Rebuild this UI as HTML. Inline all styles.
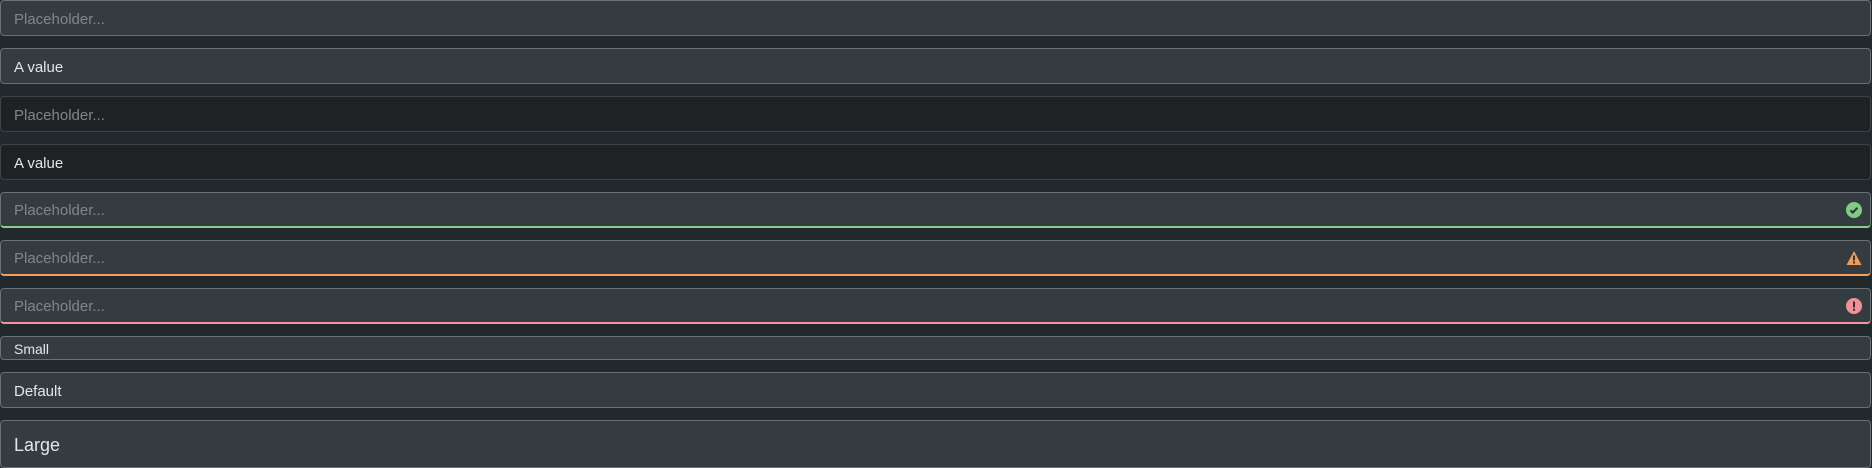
<!DOCTYPE html>
<html><head><style>
html,body{margin:0;padding:0;background:#22292c;width:1872px;height:468px;overflow:hidden}
.i{position:absolute;left:0;width:1871px;box-sizing:border-box;border:1px solid #6a7073;border-radius:4px;background:#343c42;font-family:"Liberation Sans",sans-serif;font-size:15px;color:#e4e6e7;padding-left:13px;padding-top:2px;display:flex;align-items:center}
.p{color:#80868a}
.d{background:#1e2225;border-color:#3e4448}
.ok{border-bottom:2px solid #86d08a}
.wa{border-bottom:2px solid #f2a05e}
.er{border-bottom:2px solid #f2959a}
.ic{position:absolute;right:8px;top:9px;width:16px;height:16px}
</style></head><body>
<div class="i p" style="top:0;height:36px">Placeholder...</div>
<div class="i" style="top:48px;height:36px">A value</div>
<div class="i d p" style="top:96px;height:36px">Placeholder...</div>
<div class="i d" style="top:144px;height:36px">A value</div>
<div class="i p ok" style="top:192px;height:36px">Placeholder...<svg class="ic" viewBox="0 0 16 16"><circle cx="8" cy="8" r="8" fill="#7fcb84"/><path d="M4.5 8.3l2.3 2.3 4.6-4.8" stroke="#2c3236" stroke-width="2" fill="none"/></svg></div>
<div class="i p wa" style="top:240px;height:36px">Placeholder...<svg class="ic" viewBox="0 0 16 16"><path d="M8 1L15.5 15H0.5z" fill="#f29b56"/><rect x="7" y="5.5" width="2" height="5" fill="#2c3236"/><rect x="7" y="11.5" width="2" height="2" fill="#2c3236"/></svg></div>
<div class="i p er" style="top:288px;height:36px">Placeholder...<svg class="ic" viewBox="0 0 16 16"><circle cx="8" cy="8" r="8" fill="#f29097"/><rect x="7" y="3.5" width="2" height="6" fill="#2c3236"/><rect x="7" y="10.8" width="2" height="2" fill="#2c3236"/></svg></div>
<div class="i" style="top:336px;height:24px;font-size:14px;padding-top:1px">Small</div>
<div class="i" style="top:372px;height:36px">Default</div>
<div class="i" style="top:420px;height:48px;font-size:18px">Large</div>
</body></html>
